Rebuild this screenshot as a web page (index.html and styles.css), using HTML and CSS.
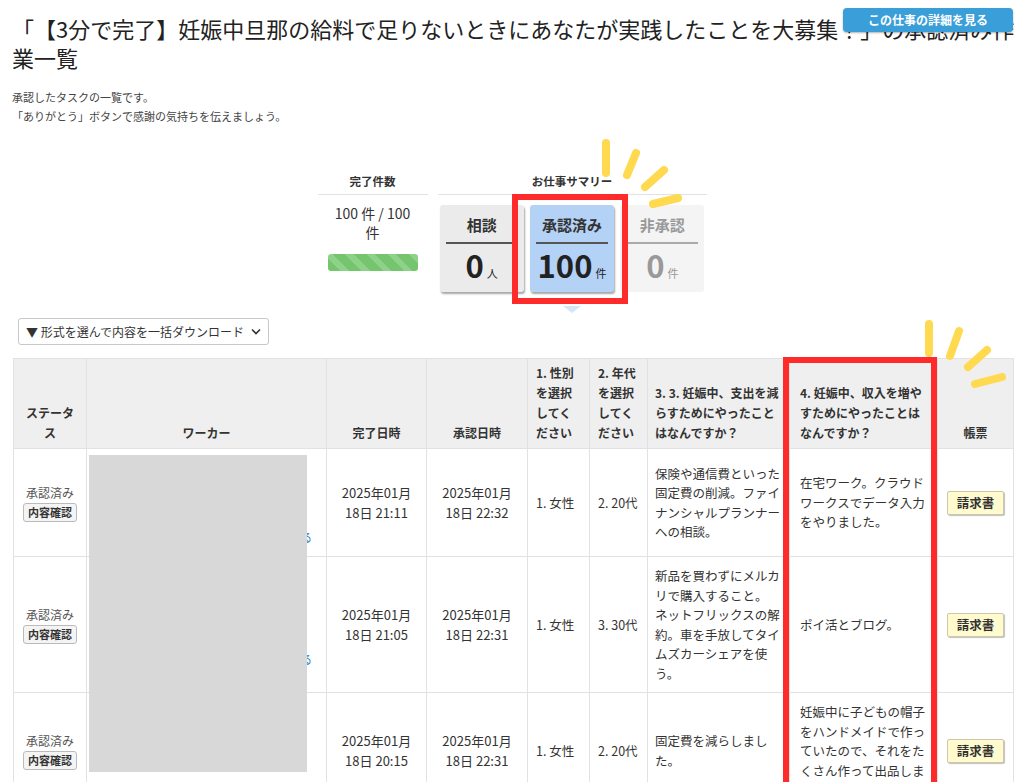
FILE: index.html
```html
<!DOCTYPE html>
<html lang="ja">
	<head>
		<meta http-equiv="Content-Type" content="text/html; charset=utf-8" />
		<title>承認済み作業一覧</title>
		<link rel="stylesheet" href="styles.css">
	</head>

	<body>
		<div class="page">
			<a class="detailBtn" href="#">この仕事の詳細を見る</a>

			<h1 class="pageTitle">「【3分で完了】妊娠中旦那の給料で足りないときにあなたが実践したことを大募集！」の承認済み作業一覧</h1>
			<p class="lead">承認したタスクの一覧です。<br>「ありがとう」ボタンで感謝の気持ちを伝えましょう。</p>

			<div class="summary">
				<div class="summaryCol doneCol">
					<h3 class="summaryHead">完了件数</h3>
					<p class="doneCount">100 件 / 100 件</p>
					<div class="progress"></div>
				</div>
				<div class="summaryCol workCol">
					<h3 class="summaryHead">お仕事サマリー</h3>
					<ul class="cards">
						<li class="card">
							<div class="cardLabel">相談</div>
							<div class="cardNum">0<span>人</span></div>
						</li>
						<li class="card active">
							<div class="cardLabel">承認済み</div>
							<div class="cardNum">100<span>件</span></div>
						</li>
						<li class="card off">
							<div class="cardLabel">非承認</div>
							<div class="cardNum">0<span>件</span></div>
						</li>
					</ul>
					<div class="markBox summaryMark"></div>
				</div>
			</div>

			<div class="dlSelect">
				<span>▼ 形式を選んで内容を一括ダウンロード</span>
				<svg width="10" height="7" viewBox="0 0 10 7"><path d="M1 1.5 L5 5.5 L9 1.5" fill="none" stroke="#333" stroke-width="1.6"/></svg>
			</div>

			<div class="tableWrap">
				<table class="taskTable">
					<colgroup>
						<col style="width:73px">
						<col style="width:240px">
						<col style="width:100px">
						<col style="width:101px">
						<col style="width:62px">
						<col style="width:58px">
						<col style="width:142px">
						<col style="width:148px">
						<col style="width:76px">
					</colgroup>
					<thead>
						<tr>
							<th>ステータス</th>
							<th>ワーカー</th>
							<th>完了日時</th>
							<th>承認日時</th>
							<th class="left">1. 性別を選択してください</th>
							<th class="left">2. 年代を選択してください</th>
							<th class="left qa3">3. 3. 妊娠中、支出を減らすためにやったことはなんですか？</th>
							<th class="left qa4">4. 妊娠中、収入を増やすためにやったことはなんですか？</th>
							<th>帳票</th>
						</tr>
					</thead>
					<tbody>
						<tr>
							<td class="status">承認済み<br><span class="smallBtn">内容確認</span></td>
							<td class="worker"><div class="workerBox"><a href="#">詳細を見る</a></div></td>
							<td class="date">2025年01月<br>18日 21:11</td>
							<td class="date">2025年01月<br>18日 22:32</td>
							<td>1. 女性</td>
							<td>2. 20代</td>
							<td class="qa3">保険や通信費といった固定費の削減。ファイナンシャルプランナーへの相談。</td>
							<td class="qa4">在宅ワーク。クラウドワークスでデータ入力をやりました。</td>
							<td class="center"><span class="billBtn">請求書</span></td>
						</tr>
						<tr>
							<td class="status">承認済み<br><span class="smallBtn">内容確認</span></td>
							<td class="worker"><div class="workerBox"><a href="#">詳細を見る</a></div></td>
							<td class="date">2025年01月<br>18日 21:05</td>
							<td class="date">2025年01月<br>18日 22:31</td>
							<td>1. 女性</td>
							<td>3. 30代</td>
							<td class="qa3">新品を買わずにメルカリで購入すること。<br>ネットフリックスの解約。車を手放してタイムズカーシェアを使う。</td>
							<td class="qa4">ポイ活とブログ。</td>
							<td class="center"><span class="billBtn">請求書</span></td>
						</tr>
						<tr>
							<td class="status">承認済み<br><span class="smallBtn">内容確認</span></td>
							<td class="worker"><div class="workerBox"></div></td>
							<td class="date">2025年01月<br>18日 20:15</td>
							<td class="date">2025年01月<br>18日 22:31</td>
							<td>1. 女性</td>
							<td>2. 20代</td>
							<td class="qa3">固定費を減らしました。</td>
							<td class="qa4">妊娠中に子どもの帽子をハンドメイドで作っていたので、それをたくさん作って出品しました。</td>
							<td class="center"><span class="billBtn">請求書</span></td>
						</tr>
					</tbody>
				</table>
				<!-- 個人情報のマスク -->
				<div class="mask"></div>
				<div class="markBox tableMark"></div>
			</div>

			<!-- 強調の線 -->
			<svg class="rays raysTop" width="100" height="80" viewBox="0 0 100 80">
				<g stroke="#ffd94f" stroke-width="8" stroke-linecap="round">
					<line x1="11" y1="9" x2="11" y2="39"/>
					<line x1="41" y1="19" x2="32" y2="41"/>
					<line x1="69" y1="36" x2="50" y2="53"/>
					<line x1="83" y1="64" x2="58" y2="70"/>
				</g>
			</svg>
			<svg class="rays raysRight" width="100" height="80" viewBox="0 0 100 80">
				<g stroke="#ffd94f" stroke-width="8" stroke-linecap="round">
					<line x1="14" y1="12" x2="14" y2="41"/>
					<line x1="44" y1="19" x2="35" y2="44"/>
					<line x1="72" y1="38" x2="53" y2="55"/>
					<line x1="87" y1="65" x2="60" y2="72"/>
				</g>
			</svg>
		</div>
	</body>
</html>
```

FILE: styles.css
```css
*{
	padding:0;
	margin:0;
	list-style: none;
	box-sizing: border-box;
}
body {
	font-family: "Noto Sans CJK JP", "Noto Sans", sans-serif;
	color: #333;
	background-color: #fff;
	text-spacing-trim: space-all;
}
a {
	text-decoration: none;
}
.page {
	position: relative;
	padding: 0 12px;
}
.detailBtn {
	position: absolute;
	z-index: 2;
	top: -6px;
	right: 11px;
	width: 170px;
	height: 24px;
	line-height: 24px;
	text-align: center;
	font-size: 12px;
	font-weight: bold;
	color: #fff;
	background-color: #3a9ed9;
	border-radius: 4px;
	box-shadow: 0 1px 2px rgba(0,0,0,.3);
}
.pageTitle {
	margin: 14px -12px 0 0;
	font-size: 22px;
	font-weight: normal;
	line-height: 29px;
	color: #222;
}
.lead {
	margin-top: 16px;
	font-size: 11px;
	line-height: 19px;
	color: #444;
}

/* サマリー */
.summary {
	display: flex;
	justify-content: center;
	gap: 10px;
	margin-top: 45px;
}
.doneCol {
	width: 110px;
}
.workCol {
	width: 269px;
	position: relative;
}
.summaryHead {
	font-size: 11.5px;
	line-height: 20px;
	padding-bottom: 3px;
	text-align: center;
	border-bottom: 1px solid #e2e2e2;
}
.doneCount {
	padding: 9px 12px 0;
	font-size: 14px;
	line-height: 19px;
	text-align: center;
}
.progress {
	width: 90px;
	height: 17px;
	margin: 12px auto 0;
	border-radius: 3px;
	background: repeating-linear-gradient(45deg, #75c56f 0 9px, #8dd288 9px 15px);
}
.cards {
	display: flex;
	gap: 6px;
	margin-top: 10px;
	padding: 0 2px;
}
.card {
	flex: 1;
	height: 87px;
	padding: 9px 6px 0;
	text-align: center;
	background-color: #ebebeb;
	border-radius: 3px;
	box-shadow: 1px 2px 2px rgba(0,0,0,.35);
	position: relative;
}
.cardLabel {
	font-size: 15px;
	font-weight: bold;
	line-height: 22px;
	padding-bottom: 6px;
	border-bottom: 2px solid #555;
}
.cardNum {
	margin-top: 3px;
	font-size: 31px;
	font-weight: bold;
	line-height: 36px;
	color: #222;
}
.cardNum span {
	font-size: 11px;
	font-weight: normal;
	margin-left: 3px;
}
.card.active {
	background-color: #b4d1f6;
}
.card.active:after {
	content: "";
	position: absolute;
	left: 50%;
	top: 100%;
	margin: 14px 0 0 -9px;
	border-top: 7px solid #d6e5f8;
	border-left: 9px solid transparent;
	border-right: 9px solid transparent;
}
.card.off {
	background-color: #f4f4f4;
	box-shadow: none;
	color: #999;
}
.card.off .cardLabel {
	border-bottom-color: #aaa;
}
.card.off .cardNum {
	color: #999;
}

/* 赤枠 */
.markBox {
	position: absolute;
	border: 6px solid #ff2b2b;
}
.summaryMark {
	left: 74px;
	top: 23px;
	width: 116px;
	height: 110px;
}

.dlSelect {
	display: flex;
	align-items: center;
	justify-content: space-between;
	width: 251px;
	height: 27px;
	margin: 26px 0 0 6px;
	padding: 0 7px 0 7px;
	font-size: 12px;
	border: 1px solid #c8c8c8;
	border-radius: 3px;
	background-color: #fff;
}

/* テーブル */
.tableWrap {
	position: relative;
	width: 1000px;
	margin: 13px 0 0 1px;
}
.taskTable {
	width: 1000px;
	table-layout: fixed;
	border-collapse: collapse;
}
.taskTable th,
.taskTable td {
	border: 1px solid #e2e2e2;
}
.taskTable th {
	background-color: #efefef;
	font-size: 12px;
	line-height: 20px;
	padding: 4px 8px 5px;
	vertical-align: bottom;
	text-align: center;
}
.taskTable th.left {
	text-align: left;
}
.taskTable td {
	font-size: 12.5px;
	line-height: 19.5px;
	padding: 9px 8px;
	vertical-align: middle;
	text-align: left;
}
.taskTable .qa3 {
	padding-left: 7px;
	padding-right: 7px;
}
.taskTable .qa4 {
	padding-left: 10px;
	padding-right: 10px;
}
.taskTable td.center,
.taskTable td.date,
.taskTable td.status {
	text-align: center;
}
.taskTable td.date {
	font-size: 13px;
	line-height: 20px;
}
.taskTable td.status {
	font-size: 12px;
	line-height: 19px;
	color: #555;
}
.smallBtn {
	display: inline-block;
	margin-top: 1px;
	padding: 0 4px;
	font-size: 11px;
	line-height: 17px;
	font-weight: bold;
	color: #333;
	background-color: #f4f4f4;
	border: 1px solid #bbb;
	border-radius: 3px;
}
.workerBox {
	height: 89px;
	display: flex;
	align-items: flex-end;
	justify-content: flex-end;
	padding-right: 6px;
}
.workerBox a {
	font-size: 11px;
	color: #2a7fc0;
}
.billBtn {
	display: inline-block;
	padding: 3px 9px;
	font-size: 12.5px;
	line-height: 16px;
	font-weight: bold;
	background-color: #fffbcf;
	border: 1px solid #ccc8a8;
	border-radius: 2px;
	box-shadow: 1px 1px 1px rgba(0,0,0,.25);
}
.mask {
	position: absolute;
	left: 76px;
	top: 97px;
	width: 218px;
	height: 317px;
	background-color: #d8d8d8;
}
.tableMark {
	left: 770px;
	top: -1px;
	width: 154px;
	height: 440px;
}

.rays {
	position: absolute;
}
.raysTop {
	left: 595px;
	top: 120px;
}
.raysRight {
	left: 915px;
	top: 298px;
}
```
